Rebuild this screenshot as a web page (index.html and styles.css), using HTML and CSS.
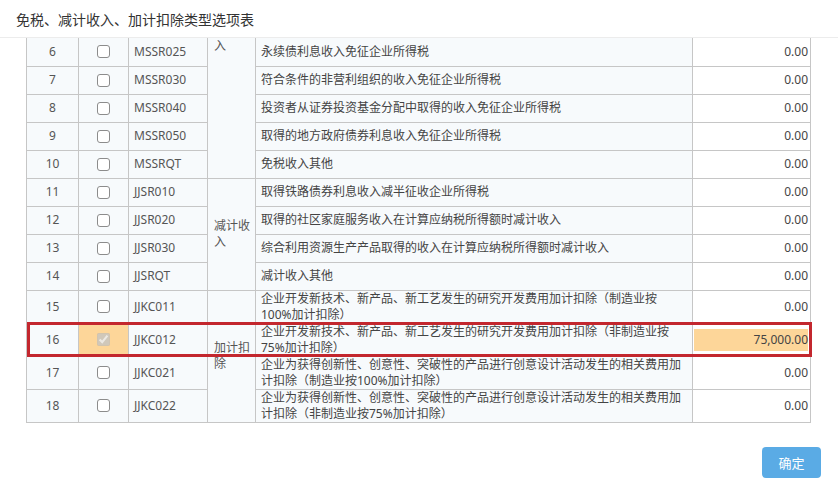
FILE: index.html
```html
<!DOCTYPE html>
<html lang="zh-CN">
<head>
<meta charset="utf-8">
<title>免税、减计收入、加计扣除类型选项表</title>
<link rel="stylesheet" href="styles.css">
</head>
<body>
<div class="dialog">
  <div class="dlg-head"><span class="dlg-title">免税、减计收入、加计扣除类型选项表</span></div>
  <div class="dlg-body">
    <table class="grid">
      <colgroup>
        <col class="c-no"><col class="c-chk"><col class="c-code"><col class="c-cat"><col class="c-desc"><col class="c-amt">
      </colgroup>
      <tbody>
        <tr class="first"><td class="no">6</td><td class="chk"><input class="cb" type="checkbox"></td><td class="code">MSSR025</td><td class="cat cont" rowspan="5">入</td><td class="desc">永续债利息收入免征企业所得税</td><td class="amt"><span class="amt-box">0.00</span></td></tr>
        <tr><td class="no">7</td><td class="chk"><input class="cb" type="checkbox"></td><td class="code">MSSR030</td><td class="desc">符合条件的非营利组织的收入免征企业所得税</td><td class="amt"><span class="amt-box">0.00</span></td></tr>
        <tr><td class="no">8</td><td class="chk"><input class="cb" type="checkbox"></td><td class="code">MSSR040</td><td class="desc">投资者从证券投资基金分配中取得的收入免征企业所得税</td><td class="amt"><span class="amt-box">0.00</span></td></tr>
        <tr><td class="no">9</td><td class="chk"><input class="cb" type="checkbox"></td><td class="code">MSSR050</td><td class="desc">取得的地方政府债券利息收入免征企业所得税</td><td class="amt"><span class="amt-box">0.00</span></td></tr>
        <tr><td class="no">10</td><td class="chk"><input class="cb" type="checkbox"></td><td class="code">MSSRQT</td><td class="desc">免税收入其他</td><td class="amt"><span class="amt-box">0.00</span></td></tr>
        <tr><td class="no">11</td><td class="chk"><input class="cb" type="checkbox"></td><td class="code">JJSR010</td><td class="cat" rowspan="4">减计收入</td><td class="desc">取得铁路债券利息收入减半征收企业所得税</td><td class="amt"><span class="amt-box">0.00</span></td></tr>
        <tr><td class="no">12</td><td class="chk"><input class="cb" type="checkbox"></td><td class="code">JJSR020</td><td class="desc">取得的社区家庭服务收入在计算应纳税所得额时减计收入</td><td class="amt"><span class="amt-box">0.00</span></td></tr>
        <tr><td class="no">13</td><td class="chk"><input class="cb" type="checkbox"></td><td class="code">JJSR030</td><td class="desc">综合利用资源生产产品取得的收入在计算应纳税所得额时减计收入</td><td class="amt"><span class="amt-box">0.00</span></td></tr>
        <tr><td class="no">14</td><td class="chk"><input class="cb" type="checkbox"></td><td class="code">JJSRQT</td><td class="desc">减计收入其他</td><td class="amt"><span class="amt-box">0.00</span></td></tr>
        <tr class="tall"><td class="no">15</td><td class="chk"><input class="cb" type="checkbox"></td><td class="code">JJKC011</td><td class="cat" rowspan="4">加计扣除</td><td class="desc">企业开发新技术、新产品、新工艺发生的研究开发费用加计扣除（制造业按<br>100%加计扣除）</td><td class="amt"><span class="amt-box">0.00</span></td></tr>
        <tr class="tall mark"><td class="no">16</td><td class="chk hl"><input class="cb" type="checkbox" checked disabled></td><td class="code">JJKC012</td><td class="desc">企业开发新技术、新产品、新工艺发生的研究开发费用加计扣除（非制造业按<br>75%加计扣除）</td><td class="amt"><span class="amt-box hl">75,000.00</span></td></tr>
        <tr class="tall"><td class="no">17</td><td class="chk"><input class="cb" type="checkbox"></td><td class="code">JJKC021</td><td class="desc">企业为获得创新性、创意性、突破性的产品进行创意设计活动发生的相关费用加<br>计扣除（制造业按100%加计扣除）</td><td class="amt"><span class="amt-box">0.00</span></td></tr>
        <tr class="tall"><td class="no">18</td><td class="chk"><input class="cb" type="checkbox"></td><td class="code">JJKC022</td><td class="desc">企业为获得创新性、创意性、突破性的产品进行创意设计活动发生的相关费用加<br>计扣除（非制造业按75%加计扣除）</td><td class="amt"><span class="amt-box">0.00</span></td></tr>
      </tbody>
    </table>
  </div>
  <div class="dlg-foot"><button class="btn-ok" type="button">确定</button></div>
</div>
</body>
</html>
```
FILE: styles.css
```css
html, body {
  margin: 0;
  padding: 0;
  background: #fff;
}

body {
  font-family: "Noto Sans", "Noto Sans CJK SC", sans-serif;
  color: #333;
}

.dialog {
  width: 838px;
  height: 490px;
  display: flex;
  flex-direction: column;
  overflow: hidden;
}

.dlg-head {
  flex: none;
  height: 37px;
  border-bottom: 1px solid #ececec;
  display: flex;
  align-items: center;
  padding-left: 16px;
}

.dlg-title {
  font-size: 14px;
  color: #333;
  padding-top: 1px;
}

.dlg-body {
  flex: none;
  height: 394px;
  box-sizing: border-box;
  padding: 0 28px 0 26px;
  overflow: hidden;
}

.grid {
  width: 784px;
  table-layout: fixed;
  border-collapse: collapse;
  font-size: 12px;
  color: #444;
}

.c-no { width: 52px; }
.c-chk { width: 50px; }
.c-code { width: 79px; }
.c-cat { width: 48px; }
.c-desc { width: 437px; }
.c-amt { width: 118px; }

.grid tr { height: 28px; }
.grid tr.tall { height: 33px; }

.grid td {
  border: 1px solid #c6c6c6;
  background: #f7fafc;
  padding: 0 5px;
  line-height: 16px;
  vertical-align: middle;
  white-space: nowrap;
}

.grid tr.first td {
  border-top: none;
}

.grid td.no {
  text-align: center;
  padding: 0;
  color: #555;
}

.grid td.code {
  color: #555;
}

.grid td.chk {
  text-align: center;
  padding: 0;
}

.cb {
  display: block;
  margin: 0 auto;
  width: 13px;
  height: 13px;
}

.cb:not(:checked) {
  appearance: none;
  -webkit-appearance: none;
  box-sizing: border-box;
  border: 1px solid #8c8c8c;
  border-radius: 3px;
  background: #fff;
}

.grid td.hl {
  background: #fdd699;
}

.grid td.cat {
  white-space: normal;
  padding: 0 4px 0 6px;
  word-break: break-all;
  color: #555;
}

.grid td.cat.cont {
  vertical-align: top;
}

.grid td.amt {
  background: #fff;
  padding: 0 2px 0 1px;
  color: #444;
}

.amt-box {
  display: block;
  height: 22px;
  line-height: 22px;
  text-align: right;
}

.amt-box.hl {
  background: #fdd699;
}

.grid tr.mark {
  position: relative;
}

.grid tr.mark::after {
  content: "";
  position: absolute;
  left: 0;
  top: -1px;
  right: -1px;
  bottom: -1px;
  border: 3px solid #c3272e;
  pointer-events: none;
}

.dlg-foot {
  flex: 1;
  display: flex;
  justify-content: flex-end;
  align-items: flex-start;
  padding: 15px 17px 0 0;
}

.btn-ok {
  width: 59px;
  height: 31px;
  border: none;
  border-radius: 4px;
  background: #5aabe5;
  color: #fff;
  font-family: "Noto Sans CJK SC", sans-serif;
  font-size: 13px;
  padding: 0;
}
```
